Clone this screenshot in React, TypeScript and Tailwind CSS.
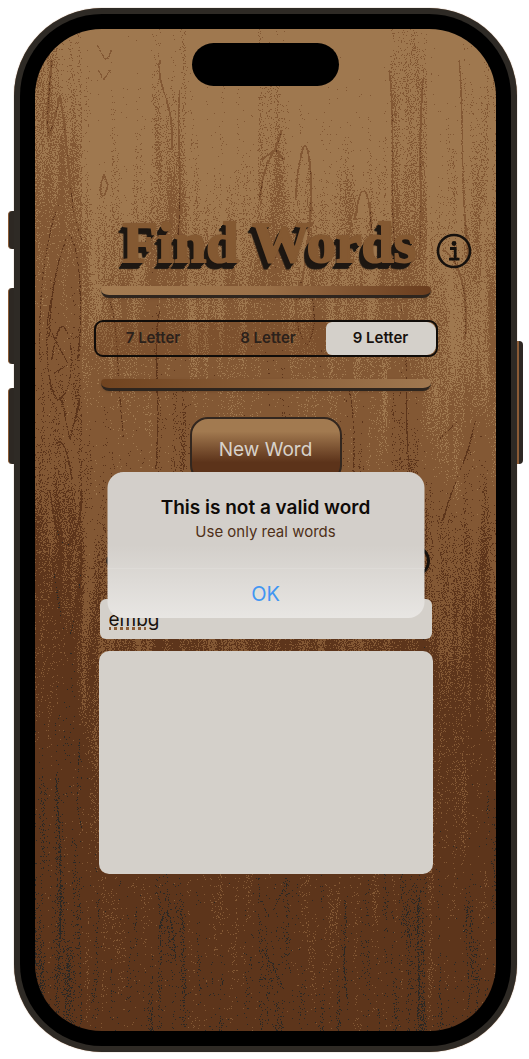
const grainLines = [
  "M52 60C46 120 44 170 60 95C70 150 68 210 82 240M60 200C44 240 38 300 40 360M69 234C80 250 84 300 78 360M69 234C60 250 50 290 49 340",
  "M51 300C44 330 46 390 58 400C72 396 76 350 66 330C62 322 56 330 52 360M50 330L68 364L54 374M62 400L70 440L80 400M56 445C62 436 68 450 72 480",
  "M50 490C56 540 62 545 68 546C74 540 82 520 82 490M52 560C58 600 64 640 68 640C74 630 80 590 82 560M56 780C60 830 62 860 60 940M80 740C78 790 74 800 82 830",
  "M98 70L104 80L110 70M98 45C104 60 106 65 112 50M104 175C96 195 104 205 108 185Z M160 60C156 90 176 100 172 150M180 90C176 140 184 180 178 240",
  "M260 200C266 150 276 160 282 130M262 160L276 150L284 160M296 200C300 150 306 130 310 160C316 200 306 260 300 300M302 280C290 310 300 340 308 345C318 330 316 300 308 284",
  "M356 220C360 180 370 180 372 230M390 70C398 140 388 190 398 270M424 80C418 140 424 200 420 260M460 60C466 120 460 190 470 260M444 250C460 260 470 290 466 340",
  "M110 300C120 330 116 380 124 440M160 310C152 350 162 400 156 470M350 390C360 440 350 470 356 520M400 300C412 350 404 400 410 470M440 440L460 420M444 520C458 470 470 460 476 420",
  "M100 900L106 912L112 900M160 930C166 900 172 910 176 960M262 900L270 920L284 890M262 950C270 960 276 970 284 990M345 900C350 940 340 960 348 1000M422 890C414 920 424 980 418 1020M470 900C462 940 474 980 468 1020",
];

const planks = [
  { x: 35, width: 47, opacity: 0.13 },
  { x: 151, width: 36, opacity: 0.08 },
  { x: 258, width: 32, opacity: 0.08 },
  { x: 392, width: 36, opacity: 0.1 },
  { x: 465, width: 32, opacity: 0.05 },
];

function WoodBackdrop() {
  return (
    <svg
      className="absolute inset-0 h-full w-full"
      viewBox="35 29 462 1003"
      preserveAspectRatio="none"
      aria-hidden="true"
    >
      <defs>
        <linearGradient id="tone" x1="0" y1="0" x2="0" y2="1">
          <stop offset="0" stopColor="#ececec" />
          <stop offset="0.13" stopColor="#dcdcdc" />
          <stop offset="0.25" stopColor="#bebebe" />
          <stop offset="0.42" stopColor="#a2a2a2" />
          <stop offset="0.56" stopColor="#868686" />
          <stop offset="0.7" stopColor="#6e6e6e" />
          <stop offset="0.85" stopColor="#646464" />
          <stop offset="1" stopColor="#5c5c5c" />
        </linearGradient>
        <radialGradient id="glow">
          <stop offset="0" stopColor="#fff" stopOpacity="0.3" />
          <stop offset="1" stopColor="#fff" stopOpacity="0" />
        </radialGradient>
        <filter id="wood" x="0" y="0" width="1" height="1" colorInterpolationFilters="sRGB">
          <feTurbulence type="fractalNoise" baseFrequency="0.11 0.008" numOctaves="3" seed="7" />
          <feColorMatrix values="1 0 0 0 0  1 0 0 0 0  1 0 0 0 0  0 0 0 0 1" result="grain" />
          <feTurbulence type="fractalNoise" baseFrequency="0.87" numOctaves="2" seed="3" />
          <feColorMatrix values="1 0 0 0 0  1 0 0 0 0  1 0 0 0 0  0 0 0 0 1" result="speckle" />
          <feComposite in="SourceGraphic" in2="grain" operator="arithmetic" k1="0" k2="1" k3="0.25" k4="-0.125" />
          <feComposite in2="speckle" operator="arithmetic" k1="0" k2="1" k3="0.46" k4="-0.23" />
          <feComponentTransfer>
            <feFuncR type="discrete" tableValues="0.17 0.365 0.514 0.627" />
            <feFuncG type="discrete" tableValues="0.16 0.208 0.349 0.471" />
            <feFuncB type="discrete" tableValues="0.145 0.106 0.204 0.31" />
          </feComponentTransfer>
        </filter>
      </defs>
      <g filter="url(#wood)">
        <rect x="35" y="29" width="462" height="1003" fill="url(#tone)" />
        {planks.map((p) => (
          <rect key={p.x} x={p.x} y="29" width={p.width} height="1003" opacity={p.opacity} />
        ))}
        <ellipse cx="460" cy="340" rx="110" ry="200" fill="url(#glow)" />
        <g fill="none" stroke="#000" strokeWidth="1.6" opacity="0.26">
          {grainLines.map((d) => (
            <path key={d} d={d} />
          ))}
        </g>
      </g>
    </svg>
  );
}

function Groove({ flipped = false }: { flipped?: boolean }) {
  return (
    <div
      className={
        flipped
          ? "h-3 w-[330px] rounded-b-lg rounded-t-sm border-b-[3px] border-[#2e251e] bg-linear-to-r from-[#70431f] to-[#a07850] shadow-sm"
          : "h-3 w-[330px] rounded-b-lg rounded-t-sm border-b-[3px] border-[#2e251e] bg-linear-to-r from-[#a47c52] via-[#9a7048] to-[#6a3d1e] shadow-sm"
      }
    />
  );
}

function InfoIcon() {
  return (
    <svg viewBox="0 0 36 36" className="size-9" aria-hidden="true">
      <circle cx="18" cy="18" r="16" fill="none" stroke="#16110d" strokeWidth="2.6" />
      <circle cx="18" cy="10.5" r="2.4" fill="#16110d" />
      <path d="M14 15.5h5.2V26M13 26.2h10.5" fill="none" stroke="#16110d" strokeWidth="2.8" />
    </svg>
  );
}

function LengthPicker() {
  const lengths = [7, 8, 9];
  return (
    <fieldset className="grid h-[37px] w-[344px] grid-cols-[1fr_1fr_110px] overflow-hidden rounded-[9px] border-2 border-[#100c09] bg-[#6b3d1b]/25">
      {lengths.map((n) => (
        <label
          key={n}
          className="flex cursor-pointer items-center justify-center rounded-md text-[15px] font-semibold text-[#2b211b] has-checked:bg-[#d4d0ca] has-checked:text-[#17110d]"
        >
          <input type="radio" name="length" defaultChecked={n === 9} className="sr-only" />
          {n} Letter
        </label>
      ))}
    </fieldset>
  );
}

function Alert() {
  return (
    <div
      role="alertdialog"
      aria-labelledby="alert-title"
      aria-describedby="alert-text"
      className="absolute left-1/2 top-[443px] flex h-[146px] w-[317px] -translate-x-1/2 flex-col rounded-2xl bg-linear-to-b from-[#d3cfca] from-50% to-[#e8e6e3] text-center"
    >
      <div className="flex-1 pt-6">
        <h2 id="alert-title" className="text-[19px] leading-6 font-semibold text-[#0f0b08]">
          This is not a valid word
        </h2>
        <p id="alert-text" className="text-[15px] leading-6 text-[#4f3018]">
          Use only real words
        </p>
      </div>
      <button type="button" className="h-[50px] border-t border-[#dedbd7] text-[20px] text-[#4296f2]">
        OK
      </button>
    </div>
  );
}

export default function App() {
  return (
    <div className="relative min-h-screen bg-white pt-2 pr-3 pb-2 pl-[14px] font-['Inter','Liberation_Sans',sans-serif]">
      <div className="absolute top-[211px] left-2 h-[38px] w-[6px] rounded-l-sm border-l border-[#8b5b35] bg-[#2d2823]" />
      <div className="absolute top-[288px] left-2 h-[76px] w-[6px] rounded-l-sm border-l border-[#8b5b35] bg-[#2d2823]" />
      <div className="absolute top-[388px] left-2 h-[76px] w-[6px] rounded-l-sm border-l border-[#8b5b35] bg-[#2d2823]" />
      <div className="absolute top-[341px] right-[6px] h-[123px] w-[6px] rounded-r-sm border-l-2 border-[#8b5b35] bg-[#2d2823]" />

      <div className="rounded-[88px] bg-[#2e2a25] p-[6px] shadow-[0_0_1px_#8b5b35]">
        <div className="rounded-[82px] bg-black p-[15px]">
          <main className="relative flex h-[1002px] flex-col items-center overflow-hidden rounded-[67px]">
            <WoodBackdrop />
            <div className="relative mt-[14px] h-[43px] w-[147px] rounded-full bg-black" />

            <header className="relative mt-[130px] grid h-[70px] w-full grid-cols-[1fr_auto_1fr] items-center">
              <h1 className="col-start-2 self-start pl-2 font-['Liberation_Serif',serif] text-[58px] leading-[54px] font-bold text-[#845932] [-webkit-text-stroke:2px_#845932] [text-shadow:0_0_2px_#3a2413,-1px_2px_0_#1d1712,-2px_3px_0_#1d1712,-3px_4px_0_#1d1712,-4px_6px_0_#1d1712,-5px_7px_1px_#1d1712]">
                Find Words
              </h1>
              <button type="button" aria-label="Info" className="mr-6 justify-self-end">
                <InfoIcon />
              </button>
            </header>

            <div className="relative flex flex-col items-center gap-[22px]">
              <Groove />
              <LengthPicker />
              <Groove flipped />
            </div>

            <button
              type="button"
              className="relative mt-[26px] h-[66px] w-[152px] rounded-[18px] border-2 border-[#33271f] bg-linear-to-b from-[#a27a50] from-20% to-[#5c331a] to-70% text-[19px] text-[#d8d2ca]"
            >
              New Word
            </button>

            <div className="relative mt-[62px] flex w-[328px] items-center justify-between pl-1">
              <span className="h-3 w-6 rounded-full bg-[#2b211b]" />
              <span className="size-8 rounded-full border-[3px] border-[#16110d]" />
            </div>

            <input
              aria-label="Word"
              defaultValue="embg"
              spellCheck={false}
              className="relative mt-[22px] h-10 w-[332px] rounded-md bg-[#d4d0ca] px-[9px] text-[19px] text-[#17110d] underline decoration-[#8b5b35] decoration-dotted decoration-3 underline-offset-1"
            />
            <textarea
              aria-label="Found words"
              readOnly
              className="relative mt-3 h-[223px] w-[334px] resize-none rounded-[10px] bg-[#d4d0ca] p-3"
            />
            <Alert />
          </main>
        </div>
      </div>
    </div>
  );
}
